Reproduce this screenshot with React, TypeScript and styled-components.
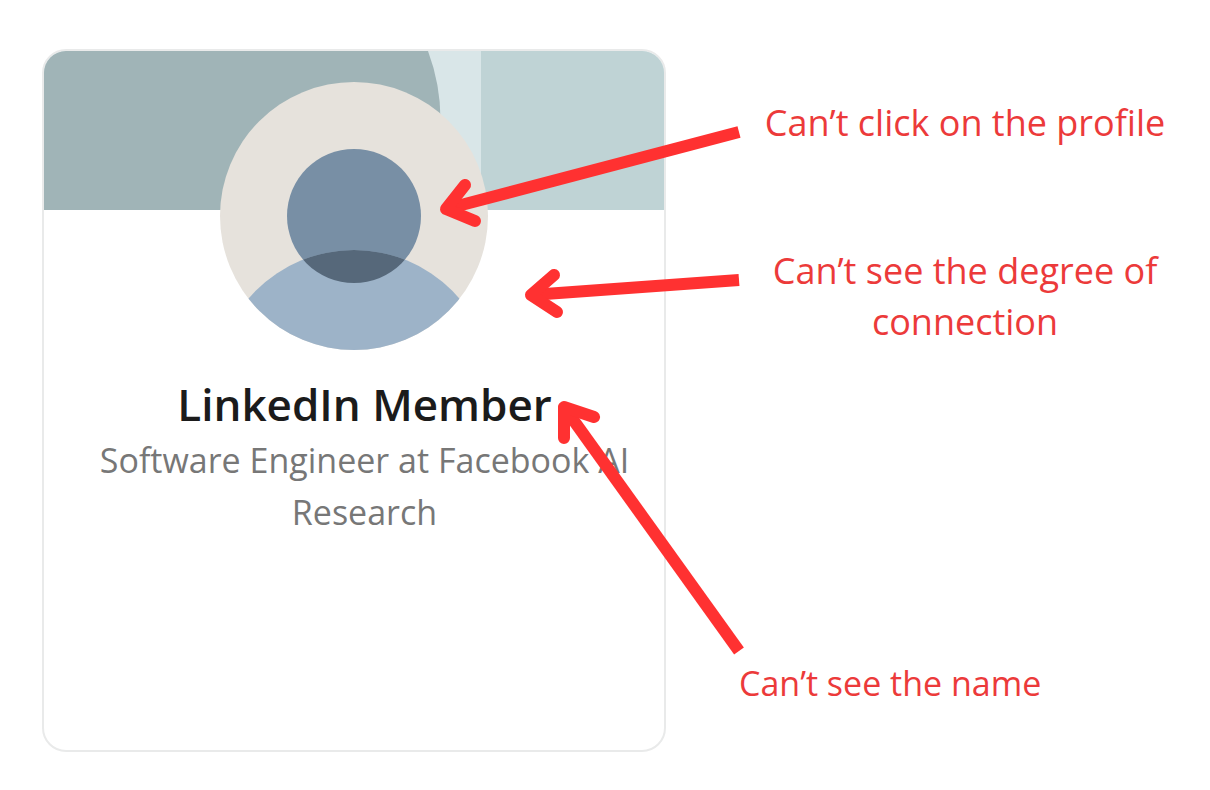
import React from "react";
import styled, { createGlobalStyle } from "styled-components";

const GlobalStyle = createGlobalStyle`
  *, *::before, *::after { box-sizing: border-box; }
  body { margin: 0; background: #fff; }
`;

const Page = styled.main`
  display: grid;
  grid-template-columns: minmax(0, 624px) minmax(0, 1fr);
  column-gap: 73px;
  padding: 49px 19px 38px 42px;
  font-family: "Open Sans", "Noto Sans", sans-serif;
`;

const Card = styled.article`
  min-height: 703px;
  border: 2px solid #e9eaea;
  border-radius: 24px;
  overflow: hidden;
  background: #fff;
`;

const Banner = styled.svg`
  display: block;
  width: 100%;
  height: 159px;
`;

const Avatar = styled.svg`
  display: block;
  position: relative;
  width: 268px;
  height: 268px;
  margin: -128px auto 0;
`;

const Identity = styled.div`
  padding: 24px 20px 24px 41px;
  text-align: center;
`;

const Name = styled.h1`
  margin: 0;
  font-size: 44px;
  font-weight: 600;
  line-height: 60px;
  color: #1b1b1b;
`;

const Headline = styled.p`
  margin: 0;
  font-size: 34px;
  font-weight: 400;
  line-height: 52px;
  color: #777;
`;

const Notes = styled.aside`
  position: relative;
  padding-top: 48px;
`;

const Note = styled.p<{ $gap?: number; $align?: "left" | "center"; $size?: number }>`
  margin: ${({ $gap = 0 }) => $gap}px 0 0;
  padding: 0 ${({ $align = "center" }) => ($align === "center" ? 16 : 0)}px;
  font-size: ${({ $size = 36 }) => $size}px;
  line-height: 51px;
  text-align: ${({ $align = "center" }) => $align};
  color: #ec3a3a;
`;

const Arrows = styled.svg`
  position: absolute;
  top: 0;
  left: -299px;
  width: 300px;
  height: 703px;
  overflow: visible;
  pointer-events: none;
  fill: none;
  stroke: #ff3131;
  stroke-width: 12px;
  stroke-linejoin: round;
`;

const arrows = [
  { shaft: "M739 132L446 209", head: "M465 185L446 209L475 221" },
  { shaft: "M739 280L531 295", head: "M554 275L531 295L557 312" },
  { shaft: "M739 651L564 407", head: "M594 417L564 407L564 438" },
];

export default function App() {
  return (
    <>
      <GlobalStyle />
      <Page>
        <Card>
          <Banner viewBox="0 0 620 159" preserveAspectRatio="xMidYMid slice" aria-hidden="true">
            <rect width="620" height="159" fill="#d9e6e8" />
            <path d="M0 0H384A198 198 0 0 1 375 159H0Z" fill="#a0b4b7" />
            <rect x="437" width="183" height="159" fill="#bfd3d5" />
          </Banner>
          <Avatar viewBox="0 0 268 268" role="img" aria-label="Profile photo">
            <defs>
              <clipPath id="avatar-disc">
                <circle cx="134" cy="134" r="134" />
              </clipPath>
              <clipPath id="avatar-head">
                <circle cx="134" cy="134" r="67" />
              </clipPath>
            </defs>
            <circle cx="134" cy="134" r="134" fill="#e6e2dc" />
            <circle cx="134" cy="134" r="67" fill="#788fa5" />
            <circle cx="134" cy="307" r="139" fill="#9db3c8" clipPath="url(#avatar-disc)" />
            <circle cx="134" cy="307" r="139" fill="#56687a" clipPath="url(#avatar-head)" />
          </Avatar>
          <Identity>
            <Name>LinkedIn Member</Name>
            <Headline>Software Engineer at Facebook AI Research</Headline>
          </Identity>
        </Card>
        <Notes>
          <Note>Can’t click on the profile</Note>
          <Note $gap={97}>Can’t see the degree of connection</Note>
          <Note $gap={311} $align="left" $size={34}>
            Can’t see the name
          </Note>
          <Arrows viewBox="440 49 300 703" aria-hidden="true">
            {arrows.map(({ shaft, head }) => (
              <g key={shaft}>
                <path d={shaft} />
                <path d={head} strokeLinecap="round" />
              </g>
            ))}
          </Arrows>
        </Notes>
      </Page>
    </>
  );
}
